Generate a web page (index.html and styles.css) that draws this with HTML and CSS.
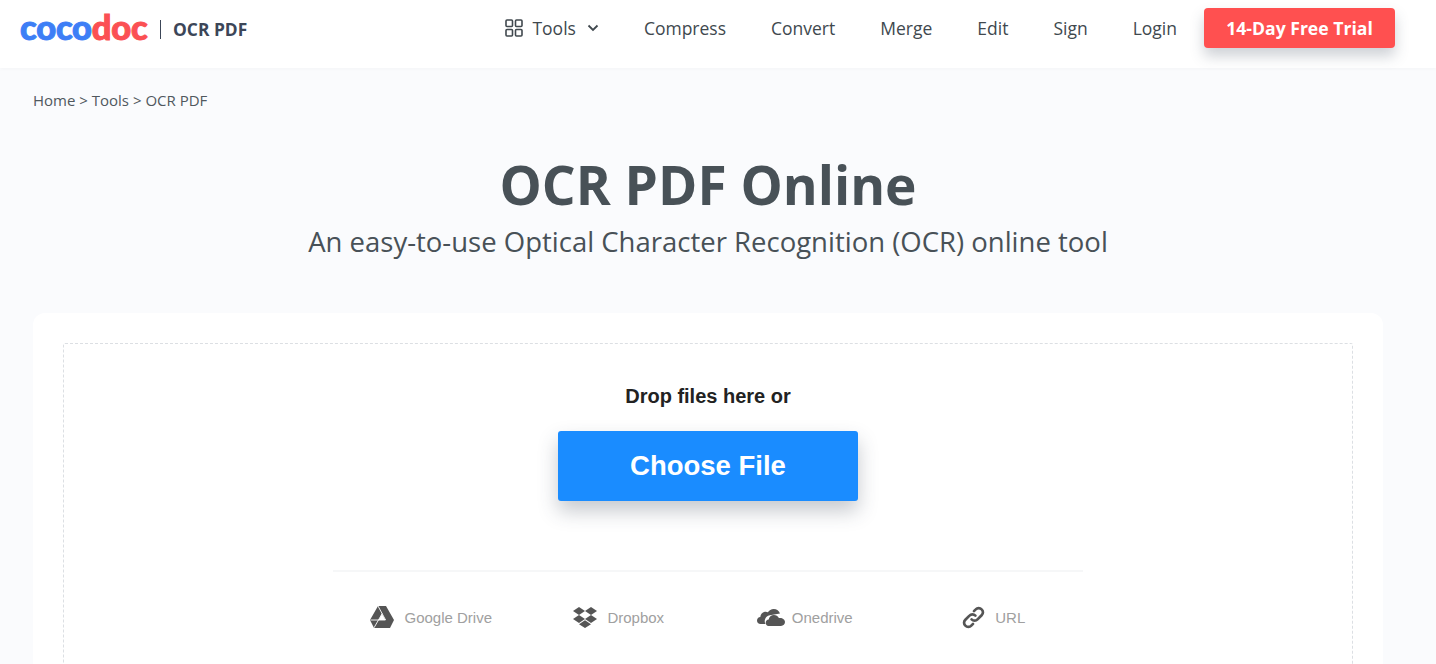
FILE: index.html
```html
<!DOCTYPE HTML>
<html lang="en">
<head>
    <meta charset="utf-8" />
    <meta name="viewport" content="width=device-width, initial-scale=1">
    <title>OCR PDF Online</title>
    <link rel="stylesheet" href="styles.css">
</head>

<body>
    <div class="header">
        <div class="brand">
            <span class="logo"><span class="logo-blue">coco</span><span class="logo-red">doc</span></span>
            <span class="brand-line"></span>
            <span class="brand-name">OCR PDF</span>
        </div>
        <div class="nav">
            <a class="nav-tools">
                <svg class="tools-icon" viewBox="0 0 18 18" width="18" height="18">
                    <rect x="1" y="1" width="6.5" height="6.5" rx="1"/>
                    <rect x="10.5" y="1" width="6.5" height="6.5" rx="1"/>
                    <rect x="1" y="10.5" width="6.5" height="6.5" rx="1"/>
                    <rect x="10.5" y="10.5" width="6.5" height="6.5" rx="1"/>
                </svg>
                <span>Tools</span>
                <svg class="chevron" viewBox="0 0 12 8" width="12" height="8">
                    <path d="M1.5 1.5 L6 6 L10.5 1.5"/>
                </svg>
            </a>
            <a>Compress</a>
            <a>Convert</a>
            <a>Merge</a>
            <a>Edit</a>
            <a>Sign</a>
            <a class="nav-login">Login</a>
            <a class="trial-btn">14-Day Free Trial</a>
        </div>
    </div>

    <div class="main">
        <p class="crumbs">Home &gt; Tools &gt; OCR PDF</p>
        <h1 class="title">OCR PDF Online</h1>
        <h2 class="subtitle">An easy-to-use Optical Character Recognition (OCR) online tool</h2>

        <div class="card">
            <div class="drop-zone">
                <p class="drop-text">Drop files here or</p>
                <a class="choose-btn">Choose File</a>
                <div class="sources">
                    <div class="source">
                        <svg viewBox="0 0 24 22" width="24" height="22">
                            <path d="M8 0 H16 L24 14 L20 22 H4 L0 14 Z M12 8 L8.6 14 H15.4 Z" fill-rule="evenodd"/>
                            <path class="cut" d="M8 0 L15.6 14 M0.5 14 H15.4 M12.2 7.5 L4 21.8"/>
                        </svg>
                        <span>Google Drive</span>
                    </div>
                    <div class="source">
                        <svg viewBox="0 0 24 21" width="24" height="21">
                            <path d="M6 0 L12 4 L6 8 L0 4 Z M18 0 L24 4 L18 8 L12 4 Z M6 8 L12 12 L6 16 L0 12 Z M18 8 L24 12 L18 16 L12 12 Z M12 13.2 L18 17.2 L12 21 L6 17.2 Z"/>
                        </svg>
                        <span>Dropbox</span>
                    </div>
                    <div class="source source-tight">
                        <svg viewBox="0 0 28 18" width="28" height="18">
                            <path d="M8.5 16 H3.6 C1.4 16 0 14.500 0 12.500 C0 10.400 1.500 9 3.300 8.900 C3.600 5.800 6 3.800 8.700 3.800 C9.500 3.800 10.300 4 10.900 4.300 C12.100 2.300 14.300 1 16.700 1 C19.700 1 22.200 3 23 5.600 L12.800 7.200 C10.300 7.500 8.500 9.300 8 11.500 C7.500 13 7.700 14.800 8.500 16 Z"/>
                            <path d="M11.500 18 C9.800 18 8.700 16.500 8.700 14.800 C8.700 13 10 11.700 11.700 11.600 C12 8.800 14.300 6.900 16.900 6.900 C19.100 6.900 20.900 8.100 21.900 10 C22.300 9.900 22.700 9.900 23.100 9.900 C25.800 9.900 28 11.600 28 14.100 C28 16.400 26.300 18 24 18 Z"/>
                        </svg>
                        <span>Onedrive</span>
                    </div>
                    <div class="source">
                        <svg class="link-icon" viewBox="0 0 24 24" width="23" height="23">
                            <path d="M10 14 C11.800 15.800 14.500 15.800 16.200 14 L20.500 9.700 C22.300 7.900 22.300 5.200 20.500 3.500 C18.800 1.700 16 1.700 14.300 3.500 L12.500 5.300"/>
                            <path d="M14 10 C12.200 8.200 9.500 8.200 7.800 10 L3.500 14.300 C1.700 16.100 1.700 18.800 3.500 20.500 C5.200 22.300 8 22.300 9.700 20.500 L11.500 18.700"/>
                        </svg>
                        <span>URL</span>
                    </div>
                </div>
            </div>
        </div>
    </div>
</body>
</html>
```

FILE: styles.css
```css
html {
    height: 100%;
    overflow: hidden;
}

body {
    margin: 0;
    height: 100%;
    overflow: hidden;
    background-color: #fafbfd;
    color: #485157;
    font-family: "Open Sans", Arial, sans-serif;
}

.header {
    display: flex;
    align-items: center;
    justify-content: space-between;
    height: 56px;
    padding: 0 41px 12px 20px;
    background-color: #fff;
    box-shadow: 0 1px 4px rgba(0, 0, 0, 0.03);
}

.brand {
    display: flex;
    align-items: center;
}

.logo {
    width: 128px;
    margin-bottom: 3px;
    font-family: Lato, "Liberation Sans", sans-serif;
    font-size: 34.5px;
    font-weight: 900;
    line-height: 52px;
    letter-spacing: -0.2px;
    white-space: nowrap;
    -webkit-text-stroke: 1px;
}

.logo-blue {
    color: #3d7ef6;
}

.logo-red {
    color: #fb5053;
}

.brand-line {
    width: 1px;
    height: 19px;
    margin: 2px 12px 0;
    background-color: #3c4658;
}

.brand-name {
    color: #3c4658;
    font-size: 17.4px;
    font-weight: 700;
    margin-top: 2px;
}

.nav {
    display: flex;
    align-items: center;
    gap: 45px;
    color: #40484e;
    font-size: 17.5px;
}

.nav-tools {
    display: flex;
    align-items: center;
}

.tools-icon {
    margin-right: 9px;
    fill: none;
    stroke: #40484e;
    stroke-width: 1.6;
}

.chevron {
    margin-left: 11px;
    fill: none;
    stroke: #40484e;
    stroke-width: 1.8;
}

.nav-login {
    margin-right: -18px;
}

.trial-btn {
    width: 191px;
    height: 40px;
    line-height: 40px;
    border-radius: 4px;
    background-color: #ff5050;
    color: #fff;
    font-size: 17.6px;
    font-weight: 700;
    text-align: center;
    box-shadow: 0 8px 14px rgba(60, 70, 90, 0.25);
}

.main {
    width: 1350px;
    margin-left: 33px;
    text-align: center;
}

.crumbs {
    margin: 0;
    padding-top: 22px;
    color: #50585e;
    font-size: 15px;
    line-height: 20px;
    text-align: left;
}

.title {
    margin: 39px 0 0;
    color: #485157;
    font-size: 53.2px;
    font-weight: 700;
    line-height: 72px;
}

.subtitle {
    margin: 1px 0 0;
    color: #485157;
    font-size: 27.5px;
    font-weight: 400;
    line-height: 40px;
}

.card {
    margin-top: 51px;
    padding: 30px;
    border-radius: 12px;
    background-color: #fff;
}

.drop-zone {
    height: 500px;
    border: 1px dashed #dcdfe3;
    border-radius: 2px;
    font-family: "Liberation Sans", Arial, sans-serif;
}

.drop-text {
    margin: 0;
    padding-top: 39px;
    color: #222;
    font-size: 20px;
    font-weight: 700;
    line-height: 26px;
}

.choose-btn {
    display: block;
    width: 300px;
    height: 70px;
    margin: 22px auto 0;
    line-height: 70px;
    border-radius: 3px;
    background-color: #1a8cff;
    color: #fff;
    font-size: 27.5px;
    font-weight: 700;
    box-shadow: 0 10px 20px rgba(50, 60, 80, 0.28);
}

.sources {
    display: grid;
    grid-template-columns: repeat(4, 187.5px);
    width: 750px;
    margin: 69px auto 0;
    padding-top: 24px;
    border-top: 2px solid #f6f7f8;
}

.source {
    display: flex;
    align-items: center;
    justify-content: center;
    gap: 10px;
    box-sizing: border-box;
    height: 42px;
    padding-left: 9px;
    color: #a0a0a0;
    font-size: 15px;
}

.source-tight {
    gap: 7px;
    padding-left: 6px;
}

.source svg {
    fill: #555;
    flex-shrink: 0;
}

.source .cut {
    fill: none;
    stroke: #fff;
    stroke-width: 0.9;
}

.source .link-icon {
    fill: none;
    stroke: #555;
    stroke-width: 2.8;
    stroke-linecap: round;
}
```
